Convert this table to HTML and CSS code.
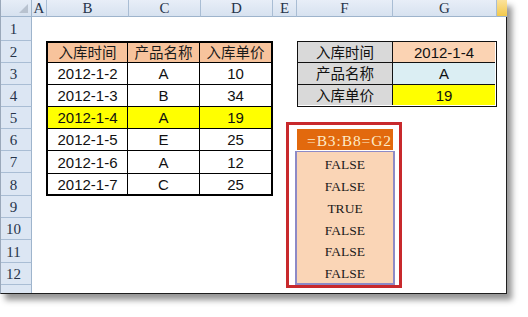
FILE: index.html
```html
<!DOCTYPE html>
<html lang="zh">
<head>
<meta charset="utf-8">
<title>Excel</title>
<link rel="stylesheet" href="styles.css">
</head>
<body>
<div class="sheet">
  <div class="corner"><svg width="9" height="9" viewBox="0 0 9 9"><polygon points="9,0 9,9 0,9" fill="#b8c2cf"/></svg></div>
  <div class="ch">A</div>
  <div class="ch">B</div>
  <div class="ch">C</div>
  <div class="ch">D</div>
  <div class="ch">E</div>
  <div class="ch">F</div>
  <div class="ch">G</div>
  <div class="ch ch-sel"></div>

  <div class="rh r1">1</div>
  <div class="rh r2">2</div>
  <div class="rh r3">3</div>
  <div class="rh r4">4</div>
  <div class="rh r5">5</div>
  <div class="rh r6">6</div>
  <div class="rh r7">7</div>
  <div class="rh r8">8</div>
  <div class="rh r9">9</div>
  <div class="rh r10">10</div>
  <div class="rh r11">11</div>
  <div class="rh r12">12</div>
  <div class="rh r13"></div>

  <div class="data">
    <div class="c hd">入库时间</div><div class="c hd">产品名称</div><div class="c hd">入库单价</div>
    <div class="c">2012-1-2</div><div class="c">A</div><div class="c">10</div>
    <div class="c">2012-1-3</div><div class="c">B</div><div class="c">34</div>
    <div class="c hl">2012-1-4</div><div class="c hl">A</div><div class="c hl">19</div>
    <div class="c">2012-1-5</div><div class="c">E</div><div class="c">25</div>
    <div class="c">2012-1-6</div><div class="c">A</div><div class="c">12</div>
    <div class="c lastrow">2012-1-7</div><div class="c lastrow">C</div><div class="c lastrow">25</div>
  </div>

  <div class="lookup">
    <div class="k">入库时间</div><div class="v v-date">2012-1-4</div>
    <div class="k">产品名称</div><div class="v v-name">A</div>
    <div class="k k-last">入库单价</div><div class="v v-price">19</div>
  </div>

  <div class="formula">
    <div class="f-head">=B3:B8=G2</div>
    <div class="f-vals">
      <div class="fv">FALSE</div>
      <div class="fv">FALSE</div>
      <div class="fv">TRUE</div>
      <div class="fv">FALSE</div>
      <div class="fv">FALSE</div>
      <div class="fv">FALSE</div>
    </div>
  </div>
</div>
</body>
</html>
```
FILE: styles.css
```css
html, body {
  margin: 0;
  padding: 0;
  background: #ffffff;
}
body {
  width: 528px;
  height: 317px;
  overflow: hidden;
}
.sheet {
  box-sizing: border-box;
  width: 507px;
  height: 294px;
  display: grid;
  grid-template-columns: 31px 15px 82px 72px 72px 24px 96px 104px 10px;
  grid-template-rows: 17px 24px 22px 22px 22px 22px 22px 22px 23px 22px 22px 23px 22px 8px;
  background: #ffffff;
  border-left: 1px solid #9aa8ba;
  border-right: 1px solid #1e1e1e;
  border-bottom: 1px solid #1e1e1e;
  box-shadow: 5px 6px 6px rgba(0, 0, 0, 0.42);
  font-family: "Liberation Sans", Arial, "Noto Sans CJK SC", sans-serif;
}
.corner {
  grid-row: 1;
  grid-column: 1;
  background: linear-gradient(#e6edf7, #d6e1ef);
  border-right: 1px solid #9eb4cc;
  border-bottom: 1px solid #9eb4cc;
  display: flex;
  align-items: flex-end;
  justify-content: flex-end;
  padding: 0 3px 3px 0;
  box-sizing: border-box;
}
.ch {
  grid-row: 1;
  box-sizing: border-box;
  background: linear-gradient(#e8eef8, #d7e2f0);
  border-right: 1px solid #a9bdd4;
  border-bottom: 1px solid #9eb4cc;
  font-family: "Liberation Serif", "Times New Roman", serif;
  font-size: 15px;
  color: #27344a;
  display: flex;
  align-items: center;
  justify-content: center;
  line-height: 1;
}
.ch-sel {
  background: linear-gradient(#fbe29c, #f2c94c);
  border-right: none;
}
.rh {
  grid-column: 1;
  box-sizing: border-box;
  background: #dce6f3;
  border-right: 1px solid #9eb4cc;
  border-bottom: 1px solid #a9bdd4;
  font-family: "Liberation Serif", "Times New Roman", serif;
  font-size: 15px;
  color: #27344a;
  display: flex;
  align-items: center;
  justify-content: center;
  padding-right: 5px;
  padding-top: 2px;
  line-height: 1;
}
.r13 { border-bottom: none; }

.data {
  grid-column: 3 / 6;
  grid-row: 3 / 10;
  box-sizing: border-box;
  border: 2px solid #000;
  margin-left: -1px;
  display: grid;
  grid-template-columns: 80px 72px 71px;
  grid-template-rows: 20px 22px 22px 22px 22px 23px 20px;
}
.c {
  box-sizing: border-box;
  border-right: 1px solid #000;
  border-bottom: 1px solid #000;
  display: flex;
  align-items: center;
  justify-content: center;
  font-size: 15px;
  color: #111;
  background: #fff;
  line-height: 1;
}
.c:nth-child(3n) { border-right: none; }
.c.lastrow { border-bottom: none; }
.c.hd {
  background: #f7c39c;
  font-family: "Noto Sans CJK SC", sans-serif;
  font-size: 14.5px;
  color: #1a1a1a;
}
.c.hl { background: #ffff00; }

.lookup {
  grid-column: 7 / 9;
  grid-row: 3 / 6;
  box-sizing: border-box;
  border: 1.5px solid #111;
  display: grid;
  grid-template-columns: 95px 102px;
  grid-template-rows: 21px 22px 20px;
}
.k, .v {
  box-sizing: border-box;
  border-bottom: 1px solid #111;
  display: flex;
  align-items: center;
  justify-content: center;
  line-height: 1;
  color: #111;
}
.k {
  background: #d9d9d9;
  border-right: 1px solid #111;
  font-family: "Noto Sans CJK SC", sans-serif;
  font-size: 14.5px;
}
.v { font-size: 15px; }
.k-last, .v-price { border-bottom: none; }
.v-date { background: #fbd3b3; }
.v-name { background: #dbeef3; }
.v-price { background: #ffff00; }

.formula {
  grid-column: 7;
  grid-row: 7 / 14;
  position: relative;
  display: flex;
  flex-direction: column;
}
.formula::before {
  content: "";
  position: absolute;
  top: -7px;
  left: -11px;
  right: -9px;
  bottom: -3px;
  border: 3px solid #c8292c;
  pointer-events: none;
}
.f-head {
  box-sizing: border-box;
  height: 21px;
  margin-bottom: 1px;
  background: #e2690d;
  color: #fdebc8;
  font-family: "Liberation Serif", "Times New Roman", serif;
  font-size: 15.5px;
  letter-spacing: 0.9px;
  display: flex;
  align-items: center;
  justify-content: flex-end;
  padding-right: 1px;
  padding-top: 3px;
  line-height: 1;
}
.f-vals {
  flex: 1;
  margin: 0 -2px;
  border: 2px solid #8d8ac6;
  border-top-width: 1px;
  background: #fad5b6;
  display: flex;
  flex-direction: column;
}
.fv {
  flex: 1;
  display: flex;
  align-items: center;
  justify-content: center;
  padding-top: 4px;
  font-family: "Liberation Serif", "Times New Roman", serif;
  font-size: 13.5px;
  color: #1a1a1a;
  line-height: 1;
}
```
